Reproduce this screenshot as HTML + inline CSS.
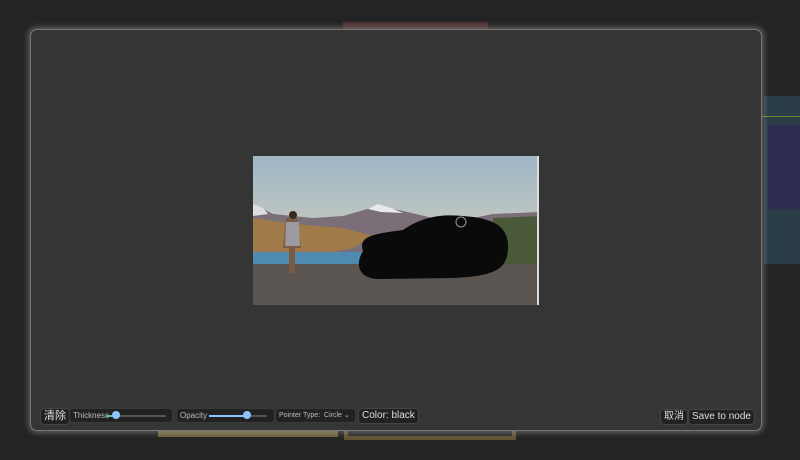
<!DOCTYPE html>
<html><head><style>
body{margin:0;width:800px;height:460px;background:#242424;position:relative;overflow:hidden;font-family:"Liberation Sans","Noto Sans CJK SC",sans-serif}
.a{position:absolute}
.dlg{left:30px;top:29px;width:730px;height:400px;background:#353535;border:1px solid #777;border-radius:7px;box-shadow:0 0 6px 2px rgba(200,200,200,.35)}
.btn{position:absolute;background:#222;border:1px solid #444;border-radius:4px;color:#ddd;font-size:10px;line-height:14px;padding:0 3px}
.sl{position:absolute;background:#222;border-radius:4px;border:1px solid #3a3a3a;height:13px;color:#bbb;font-size:8px;line-height:13px;padding-left:3px}
</style></head><body>
<div class="a" style="left:343px;top:22px;width:145px;height:7px;background:#4a3030"></div>
<div class="a" style="left:158px;top:429px;width:180px;height:8px;background:#6e6040"></div>
<div class="a" style="left:344px;top:429px;width:172px;height:11px;background:#605534"></div>
<div class="a" style="left:348px;top:429px;width:164px;height:7px;background:#2a2a2a"></div>
<div class="a" style="left:764px;top:96px;width:36px;height:168px;background:#2a3d47"></div>
<div class="a" style="left:768px;top:125px;width:32px;height:84px;background:#302e50"></div>
<div class="a" style="left:762px;top:116px;width:38px;height:1px;background:#6a8a30"></div>
<div class="dlg a"></div>
<svg class="a" style="left:253px;top:156px" width="286" height="149" viewBox="0 0 286 149">
<defs><linearGradient id="s" x1="0" y1="0" x2="0" y2="1"><stop offset="0" stop-color="#9fb7c6"/><stop offset="1" stop-color="#e6d7b8"/></linearGradient></defs>
<rect width="286" height="149" fill="url(#s)"/>
<path d="M0 48 L20 58 L40 60 L60 62 L90 60 L125 50 L150 55 L180 62 L210 64 L240 58 L286 56 L286 100 L0 100Z" fill="#7a6e78"/>
<path d="M115 53 L125 48 L138 52 L150 57 L128 56Z" fill="#e8e8f0"/>
<path d="M0 48 L10 52 L15 58 L0 60Z" fill="#e0dde0"/>
<path d="M0 62 L40 68 L90 72 L120 80 L100 92 L60 100 L0 102Z" fill="#a07a48"/>
<path d="M240 62 L286 60 L286 108 L240 108Z" fill="#4a5a38"/>
<rect y="96" width="110" height="14" fill="#4f8ab0"/>
<rect y="108" width="286" height="41" fill="#5a5550"/>
<path d="M110 95 C105 80 120 78 150 74 C170 60 190 58 210 60 C240 62 255 70 255 90 C255 112 245 120 200 122 L125 123 C105 122 102 108 110 95Z" fill="#0a0a0a"/>
<circle cx="208" cy="66" r="5" fill="none" stroke="#999" stroke-width="1"/>
<path d="M33 62 L44 62 L48 92 L42 92 L42 117 L36 117 L36 92 L30 92Z" fill="#7a5a40"/>
<path d="M33 66 L46 66 L47 90 L32 90Z" fill="#9a9aa0"/>
<circle cx="40" cy="59" r="4" fill="#3a2a20"/>
<rect x="284" y="0" width="2" height="149" fill="#ddd"/>
</svg>
<div class="btn" style="left:40px;top:408px;font-size:11px;line-height:15px">清除</div>
<div class="sl" style="left:69px;top:408px;width:99px">Thickness<div class="a" style="left:40px;top:6px;width:56px;height:2px;background:#555"></div><div class="a" style="left:36px;top:6px;width:10px;height:2px;background:#7ab"></div><div class="a" style="left:42px;top:2px;width:8px;height:8px;border-radius:50%;background:#8cc4ff"></div></div>
<div class="sl" style="left:176px;top:408px;width:94px">Opacity<div class="a" style="left:32px;top:6px;width:58px;height:2px;background:#555"></div><div class="a" style="left:32px;top:6px;width:40px;height:2px;background:#8cc4ff"></div><div class="a" style="left:66px;top:2px;width:8px;height:8px;border-radius:50%;background:#8cc4ff"></div></div>
<div class="sl" style="left:275px;top:408px;width:76px;font-size:7px">Pointer Type: &nbsp;Circle ⌄</div>
<div class="btn" style="left:358px;top:408px">Color: black</div>
<div class="btn" style="left:660px;top:409px;font-size:10px">取消</div>
<div class="btn" style="left:688px;top:409px">Save to node</div>
</body></html>
